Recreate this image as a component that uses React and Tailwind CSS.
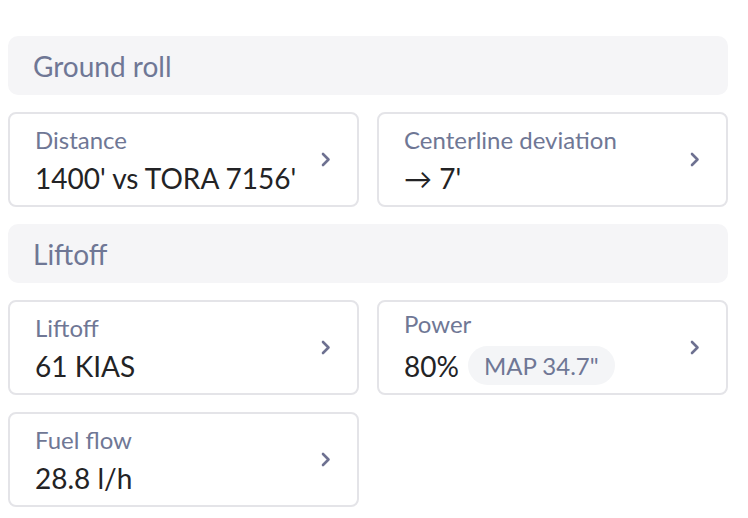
import React from "react";

function Chevron() {
  return (
    <svg width="10" height="15" viewBox="0 0 10 15" fill="none" className="shrink-0">
      <path d="M2 2l5.5 5.5L2 13" stroke="#6e7191" strokeWidth="2.6" strokeLinecap="round" strokeLinejoin="round" />
    </svg>
  );
}

function SectionHeader({ title }) {
  return (
    <div className="h-[59px] rounded-[10px] bg-[#f5f5f7] flex items-center pl-[25px]">
      <span className="text-[28px] text-[#6f7795] leading-none">{title}</span>
    </div>
  );
}

function MetricCard({ label, children }) {
  return (
    <div className="h-[95px] rounded-[8px] border-2 border-[#e4e4e8] bg-white flex items-center pl-[25px] pr-[26px]">
      <div className="flex-1 flex flex-col gap-[8px]">
        <span className="text-[24px] leading-[28px] text-[#6f7795]">{label}</span>
        <div className="text-[28px] leading-[32px] text-[#232325] flex items-center">{children}</div>
      </div>
      <Chevron />
    </div>
  );
}

export default function App() {
  return (
    <div
      className="w-[748px] h-[518px] bg-white pt-[36px] pl-[8px] pr-[20px] flex flex-col gap-[17px] overflow-hidden"
      style={{ fontFamily: "Lato, 'Noto Sans', sans-serif" }}
    >
      <SectionHeader title="Ground roll" />
      <div className="grid grid-cols-2 gap-[18px]">
        <MetricCard label="Distance">1400' vs TORA 7156'</MetricCard>
        <MetricCard label="Centerline deviation">
          <span>→ 7'</span>
        </MetricCard>
      </div>
      <SectionHeader title="Liftoff" />
      <div className="grid grid-cols-2 gap-x-[18px] gap-y-[17px]">
        <MetricCard label="Liftoff">61 KIAS</MetricCard>
        <MetricCard label="Power">
          <span>80%</span>
          <span className="ml-[9px] h-[39px] px-[16px] rounded-full bg-[#f4f5f7] text-[24px] text-[#6f7795] flex items-center">
            MAP 34.7"
          </span>
        </MetricCard>
        <MetricCard label="Fuel flow">28.8 l/h</MetricCard>
      </div>
    </div>
  );
}
